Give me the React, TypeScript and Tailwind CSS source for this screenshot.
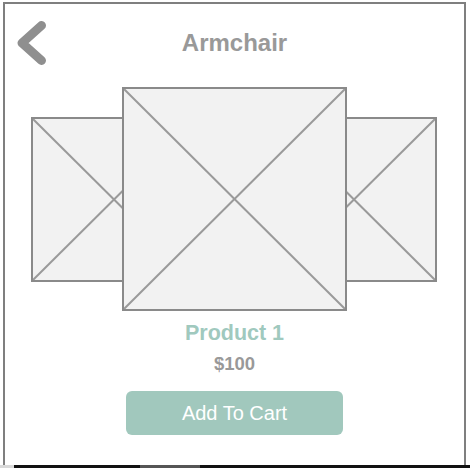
import React from 'react';

function Placeholder({ className }: { className: string }) {
  return (
    <div className={`${className} shrink-0 border-2 border-[#8a8a8a] bg-[#f2f2f2]`}>
      <svg className="block w-full h-full" viewBox="0 0 100 100" preserveAspectRatio="none">
        <line x1="0" y1="0" x2="100" y2="100" stroke="#9a9a9a" strokeWidth="2" vectorEffect="non-scaling-stroke" />
        <line x1="100" y1="0" x2="0" y2="100" stroke="#9a9a9a" strokeWidth="2" vectorEffect="non-scaling-stroke" />
      </svg>
    </div>
  );
}

export default function App() {
  return (
    <div className="w-[470px] h-[468px] bg-white flex flex-col font-['Liberation_Sans',Arial,sans-serif]">
      <div className="ml-[3px] mt-[2px] w-[463px] h-[463px] border-2 border-b-0 border-[#7f7f7f] flex flex-col items-center">
        {/* header */}
        <div className="w-full h-[78px] grid grid-cols-[1fr_auto_1fr] items-center">
          <div className="pl-[12px]">
            <svg width="30" height="44" viewBox="0 0 30 44" className="block">
              <polyline points="24.5,4.5 5,22 24.5,39.5" fill="none" stroke="#8f8f8f" strokeWidth="9" strokeLinecap="round" strokeLinejoin="round" />
            </svg>
          </div>
          <h1 className="text-[24px] font-bold text-[#999999] leading-none">Armchair</h1>
          <div />
        </div>

        {/* carousel */}
        <div className="mt-[5px] h-[224px] flex items-center justify-center -ml-[2px]">
          <Placeholder className="w-[166px] h-[165px] -mr-[75px]" />
          <Placeholder className="w-[225px] h-[224px] relative z-10" />
          <Placeholder className="w-[166px] h-[165px] -ml-[76px]" />
        </div>

        <p className="mt-[8px] text-[21.5px] leading-[28px] font-bold text-[#a0c9be]">Product 1</p>
        <p className="mt-[5px] text-[18.5px] leading-[24px] font-bold text-[#999999]">$100</p>
        <button className="mt-[15px] w-[217px] h-[44px] rounded-[6px] bg-[#a1c8bd] text-white text-[20px] leading-none">
          Add To Cart
        </button>
      </div>
      <div className="flex h-[3px]">
        <div className="w-[14px] bg-[#d9d9d9]" />
        <div className="w-[126px] bg-[#111111]" />
        <div className="w-[60px] bg-[#555555]" />
        <div className="flex-1 bg-[#111111]" />
      </div>
    </div>
  );
}
